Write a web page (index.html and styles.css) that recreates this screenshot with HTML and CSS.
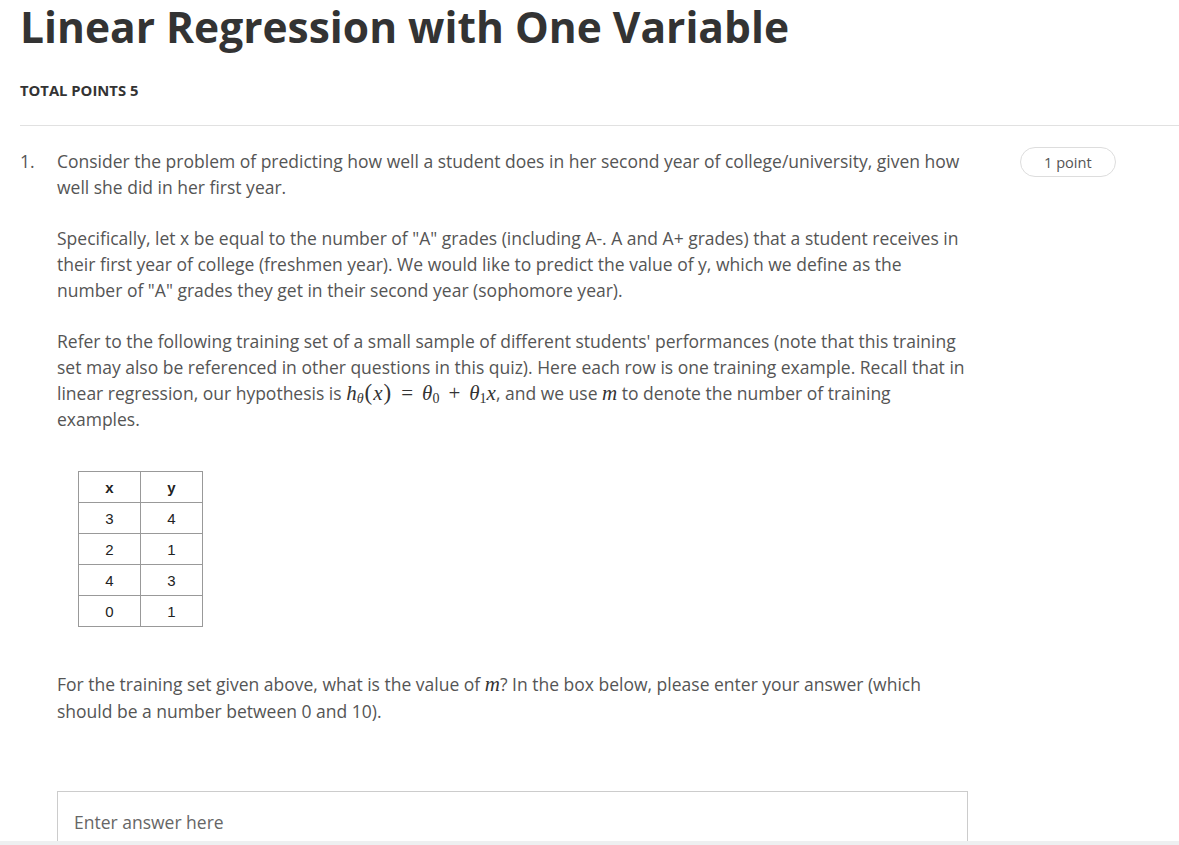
FILE: index.html
```html
<!DOCTYPE html>
<html>
<head>
<meta charset="utf-8">
<link rel="stylesheet" href="styles.css">
</head>
<body>
<div class="page">
  <header class="head">
    <h1 class="title">Linear Regression with One Variable</h1>
    <div class="total">TOTAL POINTS 5</div>
  </header>
  <section class="question">
    <div class="qnum">1.</div>
    <div class="qbody">
      <p class="para">Consider the problem of predicting how well a student does in her second year of college/university, given how well she did in her first year.</p>
      <p class="para">Specifically, let x be equal to the number of "A" grades (including A-. A and A+ grades) that a student receives in their first year of college (freshmen year). We would like to predict the value of y, which we define as the number of "A" grades they get in their second year (sophomore year).</p>
      <p class="para">Refer to the following training set of a small sample of different students' performances (note that this training set may also be referenced in other questions in this quiz). Here each row is one training example. Recall that in linear regression, our hypothesis is <span class="math"><i>h</i><sub><i>θ</i></sub><span class="paren">(</span><i>x</i><span class="paren">)</span><span class="op">=</span><i>θ</i><sub>0</sub><span class="op">+</span><i>θ</i><sub>1</sub><i>x</i></span>, and we use <span class="math"><i>m</i></span> to denote the number of training examples.</p>
      <table class="data">
        <tr><th>x</th><th>y</th></tr>
        <tr><td>3</td><td>4</td></tr>
        <tr><td>2</td><td>1</td></tr>
        <tr><td>4</td><td>3</td></tr>
        <tr><td>0</td><td>1</td></tr>
      </table>
      <p class="para ask">For the training set given above, what is the value of <span class="math"><i>m</i></span>? In the box below, please enter your answer (which should be a number between 0 and 10).</p>
      <div class="answer">Enter answer here</div>
    </div>
    <div class="points">1 point</div>
  </section>
</div>
<div class="bottombar"></div>
</body>
</html>
```

FILE: styles.css
```css
html, body {
  margin: 0;
  padding: 0;
  background: #fff;
  height: 845px;
  overflow: hidden;
}
body {
  font-family: "Open Sans", "Liberation Sans", sans-serif;
  color: #555;
  position: relative;
}
.page {
  padding-left: 20px;
}
.head {
  border-bottom: 1px solid #e1e1e1;
  padding-bottom: 26px;
}
.title {
  margin: 0;
  font-size: 42.5px;
  font-weight: 700;
  color: #333;
  line-height: 54px;
}
.total {
  margin-top: 27px;
  font-size: 14.8px;
  font-weight: 700;
  color: #333;
  line-height: 18px;
}
.question {
  display: flex;
  padding-top: 22px;
}
.qnum {
  width: 37px;
  font-size: 17.5px;
  line-height: 26px;
}
.qbody {
  width: 911px;
}
.para {
  margin: 0 0 25px 0;
  font-size: 17.5px;
  line-height: 26px;
}
.math {
  font-family: "Liberation Serif", "DejaVu Serif", serif;
  color: #333;
  font-size: 21px;
  line-height: 20px;
}
.math i {
  font-style: italic;
}
.math sub {
  font-size: 14px;
  line-height: 0;
  vertical-align: -3px;
}
.math .paren {
  font-style: normal;
  font-size: 23px;
  margin: 0 1px;
}
.math .op {
  font-style: normal;
  margin: 0 9px;
}
.data {
  border-collapse: collapse;
  margin: 39px 0 44px 21px;
  border: 1.5px solid #333;
  font-family: "Liberation Sans", Arial, sans-serif;
  font-size: 15px;
  color: #222;
}
.data th, .data td {
  width: 61px;
  height: 30px;
  text-align: center;
  border: 1px solid #999;
  padding: 0;
}
.data th { font-weight: 700; }
.ask {
  line-height: 27px;
}
.answer {
  margin-top: 66px;
  border: 1px solid #ccc;
  height: 60px;
  padding: 18px 16px 0;
  font-size: 17.5px;
  color: #666;
}
.points {
  margin-left: 52px;
  height: 28px;
  padding: 0 23px;
  border: 1px solid #ddd;
  border-radius: 15px;
  font-size: 14.6px;
  line-height: 28px;
  color: #555;
  align-self: flex-start;
  margin-top: -1px;
}
.bottombar {
  position: absolute;
  left: 0;
  right: 0;
  bottom: 0;
  height: 4px;
  background: #eef0f1;
}
```
